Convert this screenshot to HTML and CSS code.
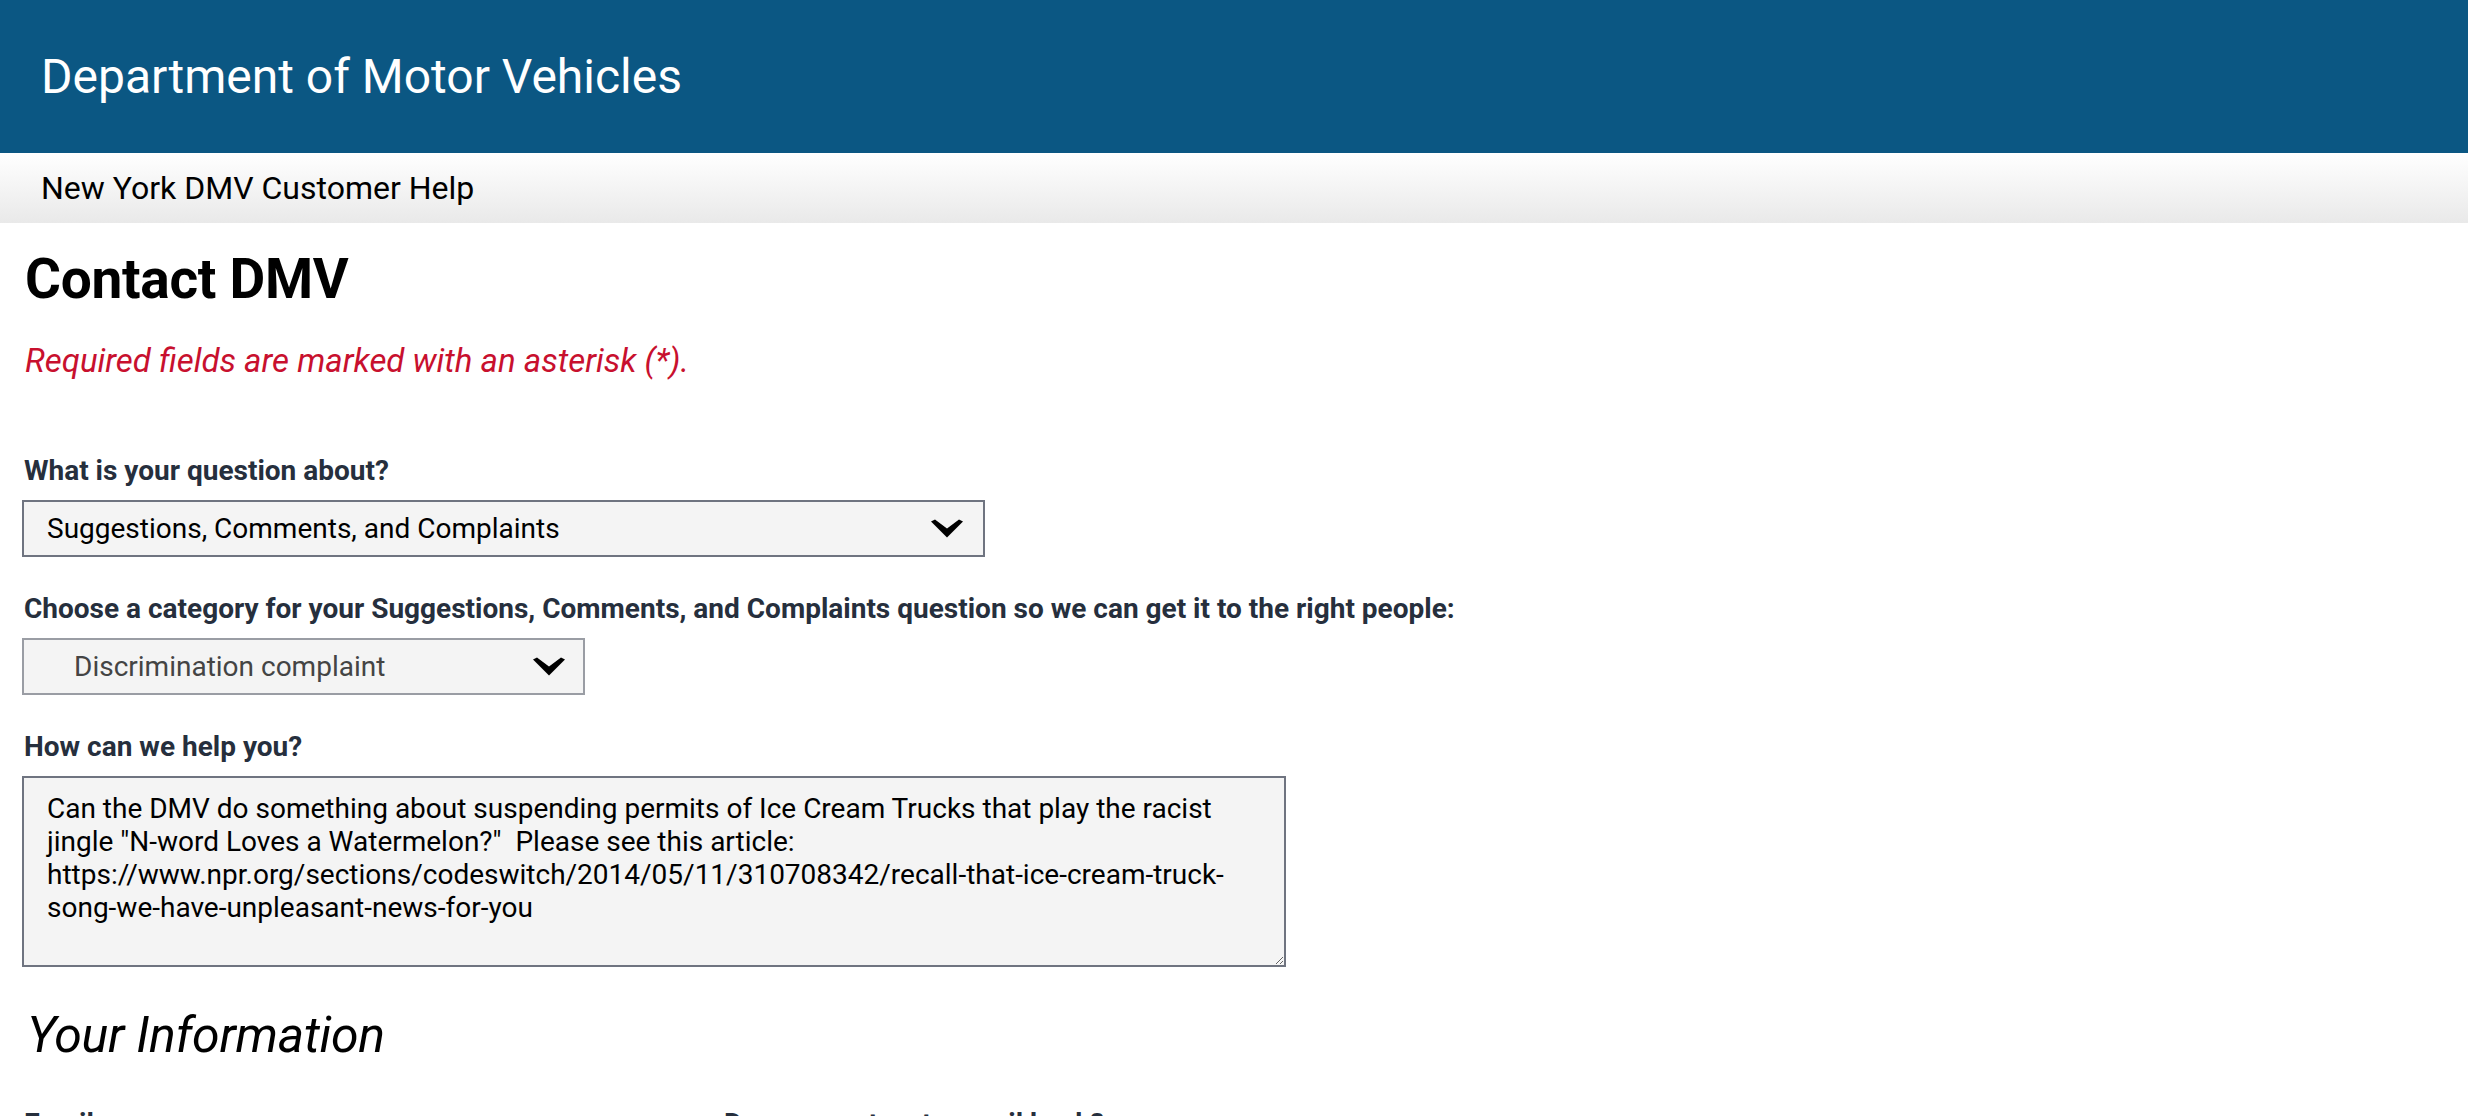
FILE: index.html
```html
<html lang="en">
<head>
  <meta charset="UTF-8" />
  <meta name="viewport" content="width=device-width, initial-scale=1.0"/>
  <title>Contact DMV</title>
  <link rel="stylesheet" href="styles.css">
</head>
<body>

  <header class="site-header">
    <div class="site-title">Department of Motor Vehicles</div>
  </header>
  <nav class="sub-nav">New York DMV Customer Help</nav>

  <main class="content">
    <h1>Contact DMV</h1>
    <p class="required-note">Required fields are marked with an asterisk (*).</p>

    <form class="contact-form">
      <div class="field">
        <label for="topic">What is your question about?</label>
        <div class="select-wrap wide">
          <select id="topic">
            <option>Suggestions, Comments, and Complaints</option>
          </select>
          <svg class="chevron" viewBox="0 0 32 18"><path d="M0 2 L4 0 L16 9 L28 0 L32 2 L16 18 Z"/></svg>
        </div>
      </div>

      <div class="field">
        <label for="category">Choose a category for your Suggestions, Comments, and Complaints question so we can get it to the right people:</label>
        <div class="select-wrap narrow">
          <select id="category" class="indented">
            <option>Discrimination complaint</option>
          </select>
          <svg class="chevron" viewBox="0 0 32 18"><path d="M0 2 L4 0 L16 9 L28 0 L32 2 L16 18 Z"/></svg>
        </div>
      </div>

      <div class="field last">
        <label for="help">How can we help you?</label>
        <textarea id="help">Can the DMV do something about suspending permits of Ice Cream Trucks that play the racist jingle "N-word Loves a Watermelon?"  Please see this article: https://www.npr.org/sections/codeswitch/2014/05/11/310708342/recall-that-ice-cream-truck-song-we-have-unpleasant-news-for-you</textarea>
      </div>

      <h2>Your Information</h2>

      <div class="info-row">
        <label>Email</label>
        <label>Do you want us to email back?</label>
      </div>
    </form>
  </main>

</body>
</html>
```

FILE: styles.css
```css
* { box-sizing: border-box; }

body {
  margin: 0 12px 0 0;
  font-family: Roboto, 'Liberation Sans', sans-serif;
  color: #000;
  background: #fff;
  overflow: hidden;
}

.site-header {
  height: 153px;
  background: #0b5783;
  display: flex;
  align-items: center;
  padding-left: 41px;
}

.site-title {
  color: #fff;
  font-size: 48px;
}

.sub-nav {
  height: 70px;
  display: flex;
  align-items: center;
  padding-left: 41px;
  font-size: 32px;
  background: linear-gradient(#ffffff, #e9e9e9);
}

.content {
  padding: 23px 0 0 22px;
}

h1 {
  margin: 0 0 30px 3px;
  font-size: 55px;
  font-weight: 700;
  line-height: 67px;
  letter-spacing: -0.3px;
}

.required-note {
  margin: 0 0 76px 3px;
  font-size: 33px;
  line-height: 36px;
  font-style: italic;
  color: #c8102e;
}

.field {
  margin-bottom: 36px;
}

.field.last {
  margin-bottom: 39px;
}

.field label,
.info-row label {
  display: block;
  margin: 0 0 14px 2px;
  font-size: 28px;
  line-height: 31px;
  font-weight: 700;
  color: #262f3d;
}

.select-wrap {
  position: relative;
  height: 57px;
}

.select-wrap.wide { width: 963px; }
.select-wrap.narrow { width: 563px; }

select {
  appearance: none;
  -webkit-appearance: none;
  width: 100%;
  height: 100%;
  margin: 0;
  padding: 0 60px 0 23px;
  border: 2px solid #6f7480;
  border-radius: 0;
  background: #f4f4f4;
  font-family: Roboto, 'Liberation Sans', sans-serif;
  font-size: 28px;
  color: #000;
}

select.indented {
  padding-left: 50px;
  color: #444;
  border-color: #9a9da4;
}

.chevron {
  position: absolute;
  right: 22px;
  top: 19px;
  width: 32px;
  height: 19px;
  fill: #000;
  pointer-events: none;
}

.narrow .chevron { right: 20px; }

textarea {
  display: block;
  width: 1264px;
  height: 191px;
  margin: 0;
  padding: 14px 30px 12px 23px;
  border: 2px solid #6f7480;
  border-radius: 0;
  background: #f4f4f4;
  font-family: Roboto, 'Liberation Sans', sans-serif;
  font-size: 28px;
  line-height: 33px;
  color: #000;
  resize: both;
}

h2 {
  margin: 0 0 44px 5px;
  font-size: 50px;
  line-height: 58px;
  font-style: italic;
  font-weight: 400;
  letter-spacing: -0.3px;
}

.info-row {
  display: grid;
  grid-template-columns: 700px 700px;
}
```
